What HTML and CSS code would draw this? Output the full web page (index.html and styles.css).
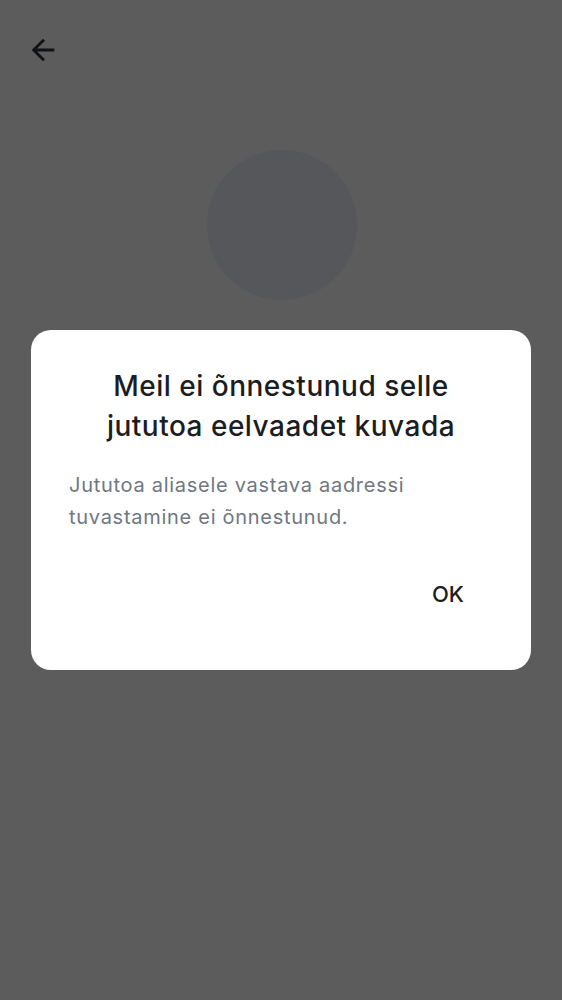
FILE: index.html
```html
<!DOCTYPE html>
<html lang="et">
<head>
<meta charset="utf-8">
<link rel="stylesheet" href="styles.css">
</head>
<body>
<div class="screen">
  <header class="toolbar">
    <button class="back" aria-label="Tagasi">
      <svg width="34" height="34" viewBox="0 0 24 24"><path d="M20 11H7.83l5.59-5.59L12 4l-8 8 8 8 1.41-1.41L7.83 13H20v-2z" fill="#111214"/></svg>
    </button>
  </header>
  <div class="avatar"></div>
</div>
<div class="dialog" role="dialog">
  <h1 class="title">Meil ei õnnestunud selle jututoa eelvaadet kuvada</h1>
  <p class="message">Jututoa aliasele vastava aadressi tuvastamine ei õnnestunud.</p>
  <div class="actions"><button class="ok">OK</button></div>
</div>
</body>
</html>
```
FILE: styles.css
```css
html, body {
  margin: 0;
  padding: 0;
}
body {
  width: 562px;
  height: 1000px;
  background: #5c5c5c;
  font-family: Inter, Roboto, "Noto Sans", sans-serif;
  position: relative;
  overflow: hidden;
}
.screen {
  display: flex;
  flex-direction: column;
  align-items: center;
}
.toolbar {
  align-self: stretch;
  height: 100px;
  padding: 33px 0 0 26px;
  box-sizing: border-box;
}
.back {
  border: 0;
  background: none;
  padding: 0;
  width: 34px;
  height: 34px;
  display: block;
}
.back svg {
  display: block;
}
.avatar {
  margin-top: 50px;
  width: 150px;
  height: 150px;
  border-radius: 50%;
  background: #55575a;
  margin-left: 1px;
}
.dialog {
  position: absolute;
  left: 31px;
  top: 330px;
  width: 500px;
  height: 340px;
  box-sizing: border-box;
  background: #ffffff;
  border-radius: 20px;
  padding: 36px 38px 0 38px;
  display: flex;
  flex-direction: column;
}
.title {
  margin: 0;
  font-size: 28px;
  font-weight: 500;
  letter-spacing: 0.5px;
  line-height: 40px;
  text-align: center;
  color: #1b1d22;
  padding: 0 6px;
}
.message {
  margin: 23px 0 0 0;
  font-size: 20px;
  letter-spacing: 0.72px;
  line-height: 32px;
  color: #6f7782;
  padding-right: 10px;
}
.actions {
  display: flex;
  justify-content: flex-end;
  margin-top: 46px;
}
.ok {
  border: 0;
  background: none;
  padding: 0 29px 0 0;
  font-family: Inter, Roboto, "Noto Sans", sans-serif;
  font-size: 22px;
  font-weight: 500;
  line-height: 30px;
  color: #1b1d22;
}
```
